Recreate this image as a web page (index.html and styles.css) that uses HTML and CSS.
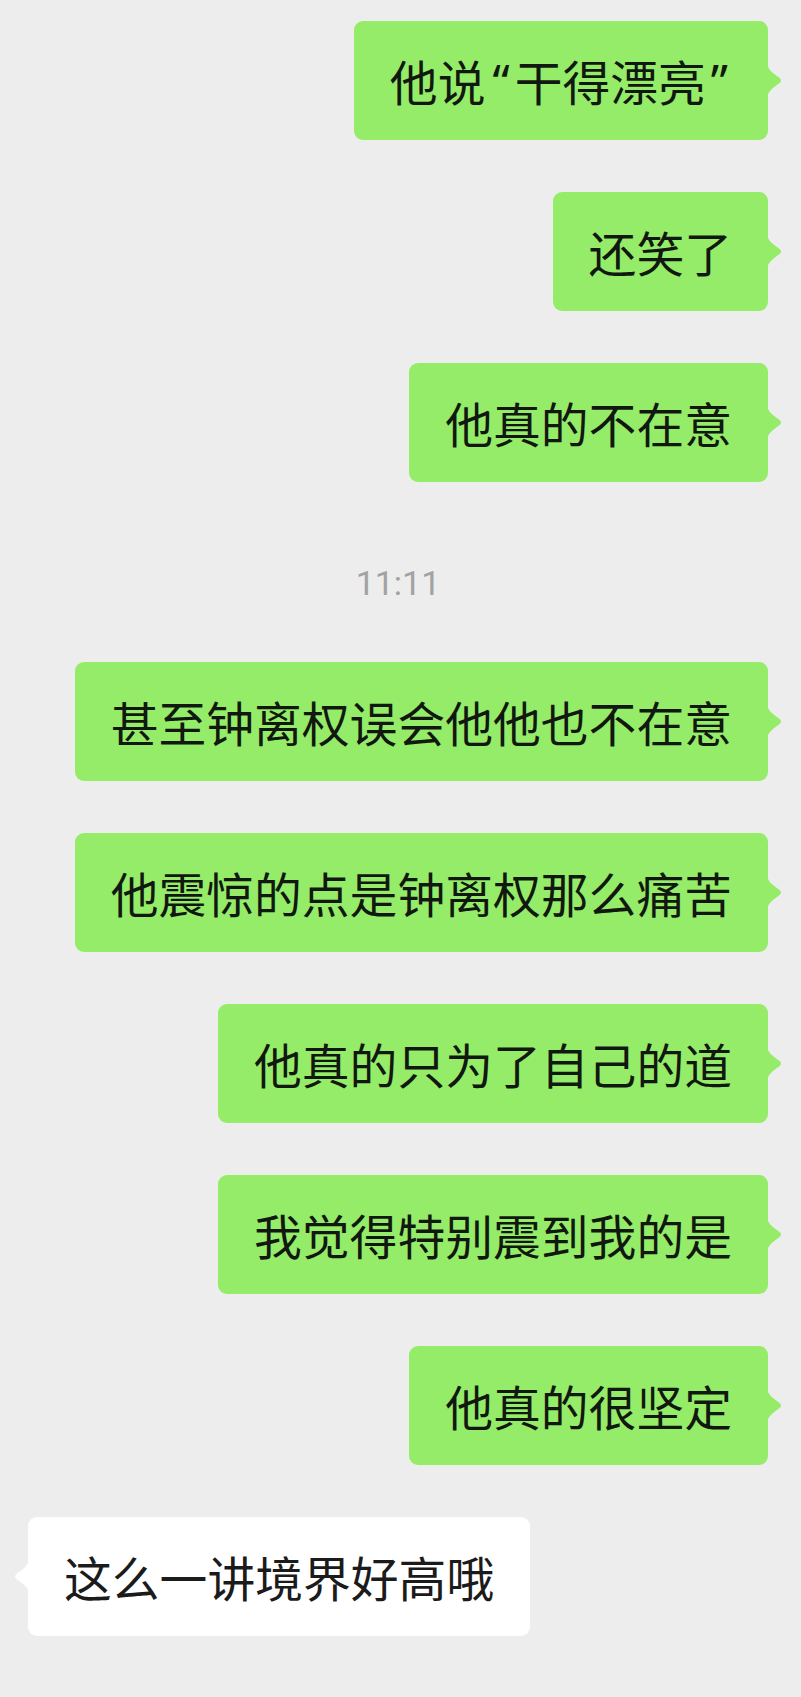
FILE: index.html
```html
<!DOCTYPE html>
<html lang="zh-CN">
<head>
<meta charset="utf-8">
<title>聊天记录</title>
<link rel="stylesheet" href="styles.css">
</head>
<body>
<div class="chat">
  <div class="row out"><div class="bubble green">他说<span class="q open">“</span>干得漂亮<span class="q">”</span></div></div>
  <div class="row out"><div class="bubble green">还笑了</div></div>
  <div class="row out"><div class="bubble green">他真的不在意</div></div>
  <div class="time">11:11</div>
  <div class="row out"><div class="bubble green">甚至钟离权误会他他也不在意</div></div>
  <div class="row out"><div class="bubble green">他震惊的点是钟离权那么痛苦</div></div>
  <div class="row out"><div class="bubble green">他真的只为了自己的道</div></div>
  <div class="row out"><div class="bubble green">我觉得特别震到我的是</div></div>
  <div class="row out"><div class="bubble green">他真的很坚定</div></div>
  <div class="row in"><div class="bubble white">这么一讲境界好高哦</div></div>
</div>
</body>
</html>
```
FILE: styles.css
```css
html, body {
  margin: 0;
  padding: 0;
  background: #ededed;
}
.chat {
  display: flex;
  flex-direction: column;
  gap: 52px;
  padding: 21px 33px 40px 28px;
  font-family: "Noto Sans CJK SC", "Noto Sans", sans-serif;
}
.row {
  display: flex;
}
.row.out {
  justify-content: flex-end;
}
.row.in {
  justify-content: flex-start;
}
.bubble {
  position: relative;
  box-sizing: border-box;
  height: 119px;
  display: flex;
  align-items: center;
  padding: 0 36px;
  border-radius: 9px;
  font-size: 47.8px;
  line-height: 1;
  color: #111810;
  white-space: nowrap;
}
.bubble.green {
  background: #95ec69;
}
.bubble.white {
  background: #ffffff;
  color: #1b1b1b;
}
.bubble.green::after,
.bubble.white::before {
  content: "";
  position: absolute;
  top: 50%;
  width: 16px;
  height: 34px;
  margin-top: -17px;
  background: inherit;
}
.bubble.green::after {
  right: -15px;
  clip-path: path("M0 0 C1 6 5 9 12 14 Q16 17 12 20 C5 25 1 28 0 34 Z");
}
.bubble.white::before {
  left: -15px;
  clip-path: path("M16 0 C15 6 11 9 4 14 Q0 17 4 20 C11 25 15 28 16 34 Z");
}
.q {
  font-family: "Noto Sans", sans-serif;
  padding: 0 4px 0 5px;
}
.q.open {
  padding: 0 5px 0 7px;
}
.time {
  box-sizing: border-box;
  height: 76px;
  padding-top: 29px;
  text-align: center;
  font-family: Roboto, "Noto Sans", sans-serif;
  font-size: 34px;
  line-height: 40px;
  color: #a2a2a2;
}
```
